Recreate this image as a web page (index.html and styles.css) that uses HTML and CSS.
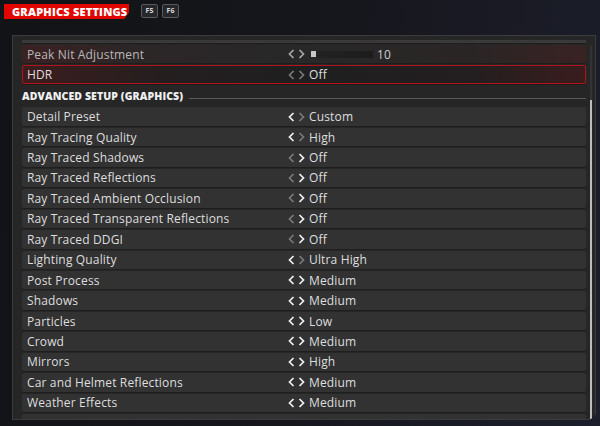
FILE: index.html
```html
<!DOCTYPE html>
<html>
<head>
<meta charset="utf-8">
<link rel="stylesheet" href="styles.css">
</head>
<body>
<div class="top">
  <div class="tag">GRAPHICS SETTINGS</div>
  <div class="key">F5</div>
  <div class="key">F6</div>
</div>
<div class="panel">
  <div class="content">
    <div class="row stub"></div>
    <div class="row peak">
      <span class="label">Peak Nit Adjustment</span>
      <span class="ctrl">
        <svg class="arr" viewBox="0 0 16 10"><polyline class="mid" points="5,1 1,5 5,9"/><polyline class="mid" points="11,1 15,5 11,9"/></svg>
        <span class="slider"><span class="knob"></span><span class="track"></span><span class="num">10</span></span>
      </span>
    </div>
    <div class="row hdr">
      <span class="label">HDR</span>
      <span class="ctrl">
        <svg class="arr" viewBox="0 0 16 10"><polyline class="dim" points="5,1 1,5 5,9"/><polyline class="dim" points="11,1 15,5 11,9"/></svg>
        <span class="val">Off</span>
      </span>
    </div>
    <div class="section"><span class="stitle">ADVANCED SETUP (GRAPHICS)</span><span class="sline"></span></div>
    <div class="row"><span class="label">Detail Preset</span><span class="ctrl"><svg class="arr" viewBox="0 0 16 10"><polyline class="on" points="5,1 1,5 5,9"/><polyline class="dim" points="11,1 15,5 11,9"/></svg><span class="val">Custom</span></span></div>
    <div class="row"><span class="label">Ray Tracing Quality</span><span class="ctrl"><svg class="arr" viewBox="0 0 16 10"><polyline class="on" points="5,1 1,5 5,9"/><polyline class="dim" points="11,1 15,5 11,9"/></svg><span class="val">High</span></span></div>
    <div class="row"><span class="label">Ray Traced Shadows</span><span class="ctrl"><svg class="arr" viewBox="0 0 16 10"><polyline class="dim" points="5,1 1,5 5,9"/><polyline class="on" points="11,1 15,5 11,9"/></svg><span class="val">Off</span></span></div>
    <div class="row"><span class="label">Ray Traced Reflections</span><span class="ctrl"><svg class="arr" viewBox="0 0 16 10"><polyline class="dim" points="5,1 1,5 5,9"/><polyline class="on" points="11,1 15,5 11,9"/></svg><span class="val">Off</span></span></div>
    <div class="row"><span class="label">Ray Traced Ambient Occlusion</span><span class="ctrl"><svg class="arr" viewBox="0 0 16 10"><polyline class="dim" points="5,1 1,5 5,9"/><polyline class="on" points="11,1 15,5 11,9"/></svg><span class="val">Off</span></span></div>
    <div class="row"><span class="label">Ray Traced Transparent Reflections</span><span class="ctrl"><svg class="arr" viewBox="0 0 16 10"><polyline class="dim" points="5,1 1,5 5,9"/><polyline class="on" points="11,1 15,5 11,9"/></svg><span class="val">Off</span></span></div>
    <div class="row"><span class="label">Ray Traced DDGI</span><span class="ctrl"><svg class="arr" viewBox="0 0 16 10"><polyline class="dim" points="5,1 1,5 5,9"/><polyline class="on" points="11,1 15,5 11,9"/></svg><span class="val">Off</span></span></div>
    <div class="row"><span class="label">Lighting Quality</span><span class="ctrl"><svg class="arr" viewBox="0 0 16 10"><polyline class="on" points="5,1 1,5 5,9"/><polyline class="dim" points="11,1 15,5 11,9"/></svg><span class="val">Ultra High</span></span></div>
    <div class="row"><span class="label">Post Process</span><span class="ctrl"><svg class="arr" viewBox="0 0 16 10"><polyline class="on" points="5,1 1,5 5,9"/><polyline class="on" points="11,1 15,5 11,9"/></svg><span class="val">Medium</span></span></div>
    <div class="row"><span class="label">Shadows</span><span class="ctrl"><svg class="arr" viewBox="0 0 16 10"><polyline class="on" points="5,1 1,5 5,9"/><polyline class="on" points="11,1 15,5 11,9"/></svg><span class="val">Medium</span></span></div>
    <div class="row"><span class="label">Particles</span><span class="ctrl"><svg class="arr" viewBox="0 0 16 10"><polyline class="on" points="5,1 1,5 5,9"/><polyline class="on" points="11,1 15,5 11,9"/></svg><span class="val">Low</span></span></div>
    <div class="row"><span class="label">Crowd</span><span class="ctrl"><svg class="arr" viewBox="0 0 16 10"><polyline class="on" points="5,1 1,5 5,9"/><polyline class="on" points="11,1 15,5 11,9"/></svg><span class="val">Medium</span></span></div>
    <div class="row"><span class="label">Mirrors</span><span class="ctrl"><svg class="arr" viewBox="0 0 16 10"><polyline class="on" points="5,1 1,5 5,9"/><polyline class="on" points="11,1 15,5 11,9"/></svg><span class="val">High</span></span></div>
    <div class="row"><span class="label">Car and Helmet Reflections</span><span class="ctrl"><svg class="arr" viewBox="0 0 16 10"><polyline class="on" points="5,1 1,5 5,9"/><polyline class="on" points="11,1 15,5 11,9"/></svg><span class="val">Medium</span></span></div>
    <div class="row"><span class="label">Weather Effects</span><span class="ctrl"><svg class="arr" viewBox="0 0 16 10"><polyline class="on" points="5,1 1,5 5,9"/><polyline class="on" points="11,1 15,5 11,9"/></svg><span class="val">Medium</span></span></div>
    <div class="row"></div>
  </div>
  <div class="scroll"><div class="thumb"></div></div>
</div>
</body>
</html>
```
FILE: styles.css
```css
html, body {
  margin: 0;
  padding: 0;
}
body {
  width: 600px;
  height: 426px;
  overflow: hidden;
  background: linear-gradient(100deg, #121316 0%, #15161b 45%, #1c1e2b 100%);
  font-family: "Open Sans", "Liberation Sans", sans-serif;
  color: #dedede;
}
.top {
  display: flex;
  align-items: flex-start;
  padding: 4px 0 0 4px;
  height: 31px;
  box-sizing: border-box;
}
.tag {
  background: #e10600;
  color: #fff;
  font-weight: 800;
  font-size: 11px;
  letter-spacing: 0.2px;
  height: 15px;
  line-height: 15px;
  width: 125px;
  box-sizing: border-box;
  padding-left: 8px;
  clip-path: polygon(0 0, 100% 0, 100% 55%, 96% 100%, 0 100%);
}
.key {
  margin-left: 4px;
  width: 15px;
  height: 12px;
  border: 1px solid #5a5a5a;
  border-radius: 2px;
  background: #26272c;
  font-size: 7px;
  font-weight: 700;
  line-height: 12px;
  text-align: center;
  color: #d8d8d8;
}
.tag + .key {
  margin-left: 12px;
}
.panel {
  margin: 4px 0 0 12px;
  width: 584px;
  height: 385px;
  box-sizing: border-box;
  border: 1px solid #3b3b3d;
  background: #262627;
  display: flex;
  padding: 4px 3px 0 9px;
  overflow: hidden;
  clip-path: polygon(0 0, 100% 0, 100% calc(100% - 6px), calc(100% - 6px) 100%, 0 100%);
}
.content {
  width: 564px;
  display: flex;
  flex-direction: column;
  gap: 2px;
  flex: none;
}
.row {
  flex: none;
  height: 18.45px;
  background: #323233;
  border-radius: 2px;
  box-shadow: 0 1px 0 #1e1e1f;
  display: flex;
  align-items: center;
  font-size: 12px;
  letter-spacing: 0.15px;
}
.stub {
  height: 3px;
  border-radius: 0;
  background: #3a3a3b;
}
.label {
  width: 261px;
  padding-left: 5px;
  flex: none;
  white-space: nowrap;
}
.ctrl {
  display: flex;
  align-items: center;
}
.arr {
  width: 17px;
  height: 10px;
  margin-right: 4px;
  fill: none;
  stroke-width: 1.7;
}
.arr .on { stroke: #f2f2f2; }
.arr .dim { stroke: #7a7a7a; }
.arr .mid { stroke: #a8a8a8; }
.val {
  white-space: nowrap;
}
.peak {
  background: linear-gradient(90deg, #3b2122 0%, #2c2627 20%, #282828 50%, #2a2525 80%, #3a2223 100%);
  color: #b8b8b8;
}
.hdr {
  background: linear-gradient(90deg, #3d1d1e 0%, #241e1f 25%, #1f1f20 50%, #231e1f 80%, #3a1d1e 100%);
  border: 1px solid #b3121a;
  box-sizing: border-box;
  height: 19px;
}
.hdr .label { padding-left: 4px; }
.slider {
  display: flex;
  align-items: center;
}
.knob {
  width: 5px;
  height: 6px;
  background: #c8c8c8;
  margin-left: 2px;
}
.track {
  width: 57px;
  height: 7px;
  background: linear-gradient(90deg, #222, #1c1c1c);
}
.num {
  margin-left: 4px;
  color: #cfcfcf;
}
.section {
  flex: none;
  height: 19px;
  display: flex;
  align-items: center;
}
.stitle {
  font-weight: 800;
  font-size: 10.5px;
  color: #efefef;
  white-space: nowrap;
  letter-spacing: 0.1px;
}
.sline {
  flex: 1;
  height: 1px;
  background: #5a5a5b;
  margin-left: 6px;
  margin-top: 5px;
}
.scroll {
  margin-left: 4px;
  width: 2px;
  margin-top: 6px;
  background: #333335;
  display: flex;
  flex-direction: column;
  flex: none;
}
.thumb {
  margin-top: 54px;
  flex: 1;
  background: #bdbdbd;
}
```
